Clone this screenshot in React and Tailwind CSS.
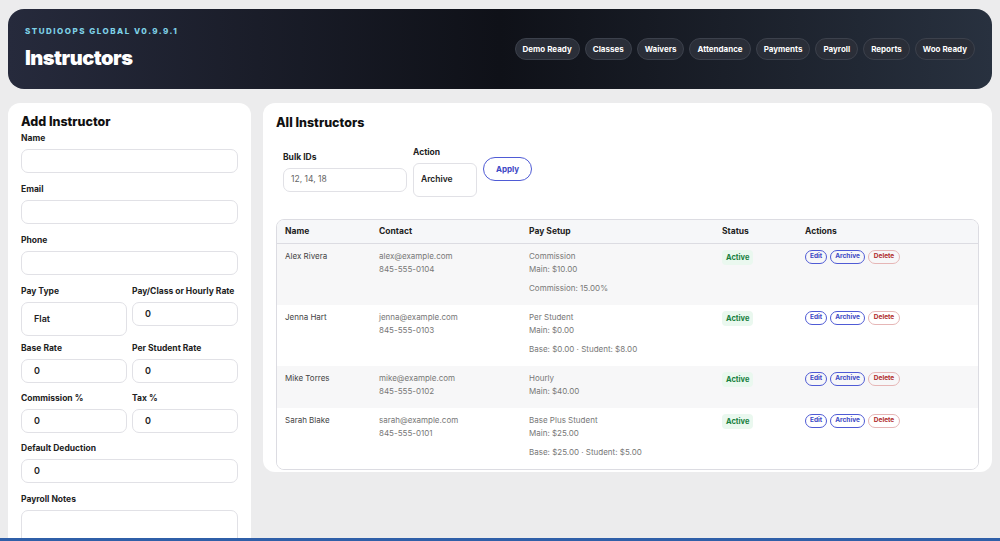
const font = { fontFamily: 'Inter, "Noto Sans", sans-serif' };

const pills = ['Demo Ready', 'Classes', 'Waivers', 'Attendance', 'Payments', 'Payroll', 'Reports', 'Woo Ready'];

const rows = [
  { name: 'Alex Rivera', email: 'alex@example.com', phone: '845-555-0104', type: 'Commission', main: 'Main: $10.00', extra: 'Commission: 15.00%', bg: 'bg-[#f7f7f8]' },
  { name: 'Jenna Hart', email: 'jenna@example.com', phone: '845-555-0103', type: 'Per Student', main: 'Main: $0.00', extra: 'Base: $0.00 · Student: $8.00', bg: 'bg-white' },
  { name: 'Mike Torres', email: 'mike@example.com', phone: '845-555-0102', type: 'Hourly', main: 'Main: $40.00', extra: null, bg: 'bg-[#f7f7f8]' },
  { name: 'Sarah Blake', email: 'sarah@example.com', phone: '845-555-0101', type: 'Base Plus Student', main: 'Main: $25.00', extra: 'Base: $25.00 · Student: $5.00', bg: 'bg-white' },
];

const Label = ({ children }) => <div className="text-[8.5px] leading-[10px] whitespace-nowrap font-bold text-[#222] mb-[6px]">{children}</div>;
const Input = ({ value, h = 'h-[24px]' }) => (
  <div className={`${h} rounded-[7px] border border-[#e1e1e6] bg-white px-[12px] flex items-center text-[9px] font-semibold text-[#222]`}>{value}</div>
);

const App = () => {
  return (
    <div style={font} className="w-[1000px] h-[541px] overflow-hidden bg-[#ececed] relative">
      <div className="mx-[8px] mt-[9px] h-[80px] rounded-[16px] bg-gradient-to-r from-[#262a3c] via-[#0f1118] to-[#28313f] flex items-center justify-between px-[17px]">
        <div>
          <div className="text-[8px] font-extrabold tracking-[1.5px] text-[#7ed0e6]">STUDIOOPS GLOBAL V0.9.9.1</div>
          <div className="text-[20px] font-black text-white mt-[6px] tracking-[-0.5px]">Instructors</div>
        </div>
        <div className="flex gap-[5px] mr-[0px]">
          {pills.map(p => (
            <div key={p} className="h-[22px] px-[7px] rounded-full bg-[#2a2e38] border border-[#3c414c] text-white text-[8px] font-bold flex items-center">{p}</div>
          ))}
        </div>
      </div>

      <div className="flex gap-[12px] mx-[8px] mt-[14px] items-start">
        <div className="w-[243px] h-[460px] bg-white rounded-[12px] px-[13px] pt-[11px]">
          <div className="text-[12.5px] font-extrabold text-[#111] mb-[3px] leading-[16px]">Add Instructor</div>
          <Label>Name</Label>
          <div className="mb-[11px]"><Input /></div>
          <Label>Email</Label>
          <div className="mb-[11px]"><Input /></div>
          <Label>Phone</Label>
          <div className="mb-[11px]"><Input /></div>
          <div className="grid grid-cols-2 gap-x-[5px]">
            <div>
              <Label>Pay Type</Label>
              <Input value="Flat" h="h-[34px]" />
            </div>
            <div>
              <Label>Pay/Class or Hourly Rate</Label>
              <Input value="0" />
            </div>
          </div>
          <div className="grid grid-cols-2 gap-x-[5px] mt-[7px]">
            <div><Label>Base Rate</Label><Input value="0" /></div>
            <div><Label>Per Student Rate</Label><Input value="0" /></div>
          </div>
          <div className="grid grid-cols-2 gap-x-[5px] mt-[10px]">
            <div><Label>Commission %</Label><Input value="0" /></div>
            <div><Label>Tax %</Label><Input value="0" /></div>
          </div>
          <div className="mt-[10px]"><Label>Default Deduction</Label><Input value="0" /></div>
          <div className="mt-[11px]"><Label>Payroll Notes</Label>
            <div className="h-[46px] rounded-[7px] border border-[#e1e1e6]" />
          </div>
          <div className="mt-[9px]"><Label>Status</Label></div>
        </div>

        <div className="flex-1 h-[369px] bg-white rounded-[12px] px-[13px] pt-[11px]">
          <div className="text-[12.5px] font-extrabold text-[#111]">All Instructors</div>
          <div className="flex items-start gap-[6px] mt-[14px] ml-[7px]">
            <div className="mt-[5px]">
              <Label>Bulk IDs</Label>
              <div className="w-[124px] h-[24px] rounded-[7px] border border-[#e1e1e6] px-[7px] flex items-center text-[8.5px] text-[#666]">12, 14, 18</div>
            </div>
            <div>
              <Label>Action</Label>
              <div className="w-[64px] h-[34px] rounded-[6px] border border-[#e1e1e6] px-[7px] flex items-center text-[8.5px] font-semibold text-[#222]">Archive</div>
            </div>
            <div className="mt-[10px] h-[24px] px-[12px] rounded-full border border-[#4f5bd5] text-[#3b47c4] text-[8px] font-bold flex items-center">Apply</div>
          </div>

          <div className="mt-[22px] border border-[#dcdce2] rounded-[8px] overflow-hidden">
            <div className="grid grid-cols-[94px_150px_193px_83px_1fr] h-[24px] items-center bg-[#f6f7f9] border-b border-[#dcdce2] px-[8px] text-[8.5px] font-bold text-[#222]">
              <div>Name</div><div>Contact</div><div>Pay Setup</div><div>Status</div><div>Actions</div>
            </div>
            {rows.map(r => (
              <div key={r.name} className={`grid grid-cols-[94px_150px_193px_83px_1fr] px-[8px] pt-[6px] pb-[10px] text-[8px] text-[#777] ${r.bg}`}>
                <div className="text-[#444]">{r.name}</div>
                <div className="leading-[13px]">{r.email}<br />{r.phone}</div>
                <div className="leading-[13px]">
                  <div>{r.type}</div>
                  <div>{r.main}</div>
                  {r.extra && <div className="mt-[6px]">{r.extra}</div>}
                </div>
                <div><span className="inline-block px-[4px] py-[2px] bg-[#eaf8ef] rounded text-[#17803d] font-bold text-[7.5px]">Active</span></div>
                <div className="flex gap-[3px] text-[6.5px] font-bold">
                  <span className="h-[14px] px-[4px] rounded-full border border-[#4f5bd5] text-[#3b47c4] flex items-center">Edit</span>
                  <span className="h-[14px] px-[4px] rounded-full border border-[#4f5bd5] text-[#3b47c4] flex items-center">Archive</span>
                  <span className="h-[14px] px-[5px] rounded-full border border-[#e6b6b6] text-[#b02a2a] flex items-center">Delete</span>
                </div>
              </div>
            ))}
          </div>
        </div>
      </div>
      <div className="absolute bottom-0 left-0 right-0 h-[3px] bg-[#2f5fa8]" />
    </div>
  );
};

export default App;
